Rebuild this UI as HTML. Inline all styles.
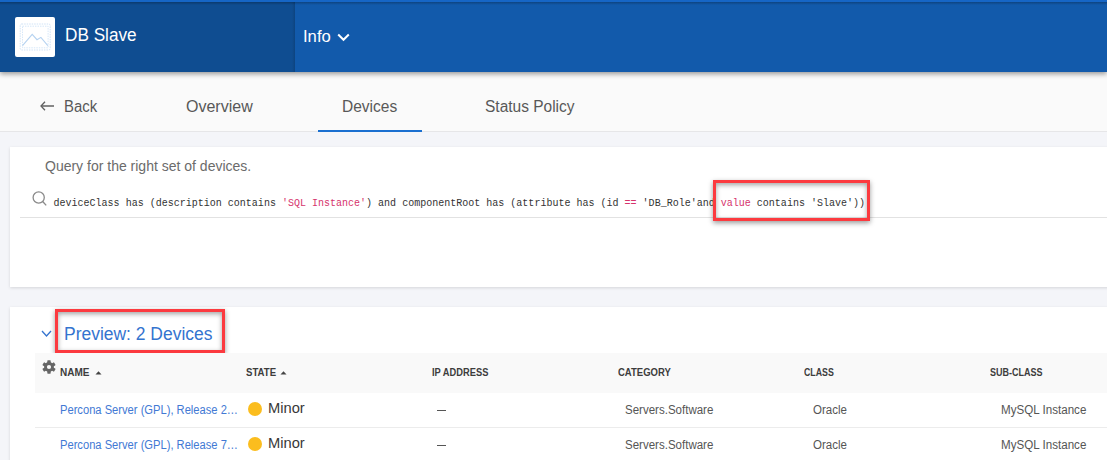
<!DOCTYPE html>
<html><head><meta charset="utf-8">
<style>
*{margin:0;padding:0;box-sizing:border-box}
html,body{width:1107px;height:460px;overflow:hidden;background:#f4f5f9;font-family:"Liberation Sans",sans-serif}
.abs{position:absolute;white-space:nowrap}
.sx{display:inline-block;transform-origin:0 0}
#hdr{position:absolute;left:0;top:0;width:1107px;height:72px;background:#125aab;box-shadow:0 2px 5px rgba(0,0,0,.4);z-index:3}
#hdrtop{position:absolute;left:0;top:0;width:1107px;height:2px;background:#1666c6;z-index:5}
#hdrtopsh{position:absolute;left:0;top:2px;width:1107px;height:3px;background:linear-gradient(rgba(0,0,0,.25),rgba(0,0,0,0));z-index:5}
#hdrl{position:absolute;left:0;top:0;width:295px;height:72px;background:#0f4d91}
#hdrlsh{position:absolute;left:292px;top:0;width:3px;height:72px;background:linear-gradient(90deg,rgba(0,0,0,0),rgba(0,0,0,.12))}
#logo{position:absolute;left:15px;top:17px;width:40px;height:40px;background:#fff;border-radius:2px}
#tabs{position:absolute;left:0;top:72px;width:1107px;height:60px;background:#fafafa;border-bottom:1px solid #e6e6e8;z-index:2}
.tab{position:absolute;top:26px;font-size:16px;color:#585858;line-height:18px}
#uline{position:absolute;left:318px;top:58px;width:104px;height:2px;background:#1a6fd0}
.card{position:absolute;left:10px;width:1110px;background:#fff;box-shadow:0 1px 3px rgba(0,0,0,.13)}
.mono{font-family:"Liberation Mono",monospace;font-size:10px;color:#333}
.pk{color:#d6336c}
.red{position:absolute;border:3px solid #fc3a3f;box-shadow:0 2px 5px rgba(0,0,0,.4), inset 0 2px 5px rgba(0,0,0,.36)}
.th{position:absolute;top:367px;font-size:10px;font-weight:bold;color:#3d3d3d;line-height:12px}
.td{position:absolute;font-size:12px;color:#555;line-height:14px}
.lnk{color:#4279d4}
.dot{position:absolute;width:14px;height:14px;border-radius:50%;background:#fbbd1e}
.minor{position:absolute;font-size:14px;color:#383838;line-height:16px}
</style></head><body>
<div id="hdr">
  <div id="hdrl"></div>
  <div id="hdrlsh"></div>
  <div id="logo">
    <svg width="40" height="40" viewBox="0 0 40 40">
      <rect x="5.2" y="7" width="30" height="26" rx="1.5" fill="none" stroke="#cfe2f6" stroke-width="1" stroke-dasharray="1.5 1"/>
      <rect x="7.5" y="9.2" width="25.6" height="21.6" fill="none" stroke="#d6e7f8" stroke-width="1" stroke-dasharray="1.5 1"/>
      <polyline points="7.5,28.6 17.2,17.3 22,22.7 25.9,20.4 32.8,28.6" fill="none" stroke="#b5d2f0" stroke-width="1.1"/>
    </svg>
  </div>
  <div class="abs" style="left:65px;top:25px;font-size:18px;color:#fff;line-height:20px"><span class="sx" style="transform:scaleX(.955)">DB Slave</span></div>
  <div class="abs" style="left:303px;top:28px;font-size:16px;color:#fff;line-height:18px"><span class="sx" style="transform:scaleX(1.04)">Info</span></div>
  <svg class="abs" style="left:337px;top:33px" width="13" height="9" viewBox="0 0 13 9"><polyline points="1.2,1.5 6.5,6.8 11.8,1.5" fill="none" stroke="#fff" stroke-width="2"/></svg>
</div>
<div id="hdrtop"></div>
<div id="hdrtopsh"></div>
<div id="tabs">
  <svg class="abs" style="left:40px;top:29px" width="15" height="10" viewBox="0 0 15 10"><polyline points="5,0.8 1,5 5,9.2" fill="none" stroke="#606060" stroke-width="1.3"/><line x1="1.2" y1="5" x2="14" y2="5" stroke="#606060" stroke-width="1.5"/></svg>
  <div class="tab" style="left:63.5px"><span class="sx" style="transform:scaleX(.93)">Back</span></div>
  <div class="tab" style="left:186px">Overview</div>
  <div class="tab" style="left:342px"><span class="sx" style="transform:scaleX(.97)">Devices</span></div>
  <div class="tab" style="left:485px"><span class="sx" style="transform:scaleX(.968)">Status Policy</span></div>
  <div id="uline"></div>
</div>

<div class="card" style="top:147px;height:140px"></div>
<div class="abs" style="left:45px;top:158px;font-size:14px;color:#6b6b6b;line-height:16px">Query for the right set of devices.</div>
<svg class="abs" style="left:32px;top:191px" width="16" height="16" viewBox="0 0 16 16"><circle cx="6.7" cy="6.5" r="5.6" fill="none" stroke="#8a8a8a" stroke-width="1.3"/><line x1="10.7" y1="10.5" x2="14.2" y2="14.4" stroke="#8a8a8a" stroke-width="1.3"/></svg>
<div class="abs mono" style="left:53.5px;top:198px;line-height:12px;letter-spacing:0.01px">deviceClass has (description contains <span class="pk">'SQL Instance'</span>) and componentRoot has (attribute has (id <span class="pk">==</span> 'DB_Role'and <span class="pk">value</span> contains 'Slave'))</div>
<div class="abs" style="left:20px;top:217px;width:1100px;height:1px;background:#e2e2e2"></div>
<div class="red" style="left:713px;top:180px;width:157px;height:41px"></div>

<div class="card" style="top:307px;height:160px"></div>
<svg class="abs" style="left:41px;top:330px" width="11" height="8" viewBox="0 0 11 8"><polyline points="1,1 5.5,6 10,1" fill="none" stroke="#3474cf" stroke-width="1.3"/></svg>
<div class="abs" style="left:64px;top:324px;font-size:18px;color:#3474cf;line-height:20px"><span class="sx" style="transform:scaleX(.97)">Preview: 2 Devices</span></div>
<div class="red" style="left:55px;top:309px;width:170px;height:44px"></div>

<div class="abs" style="left:35px;top:353px;width:1100px;height:40px;background:#f9f9f9"></div>
<svg class="abs" style="left:41px;top:358.7px" width="16" height="16" viewBox="0 0 16 16"><g fill="#666"><rect x="6.3" y="1.3" width="3.4" height="4" rx="0.6" transform="rotate(0 8 8)"/><rect x="6.3" y="1.3" width="3.4" height="4" rx="0.6" transform="rotate(-60 8 8)"/><rect x="6.3" y="1.3" width="3.4" height="4" rx="0.6" transform="rotate(60 8 8)"/><rect x="6.3" y="1.3" width="3.4" height="4" rx="0.6" transform="rotate(120 8 8)"/><rect x="6.3" y="1.3" width="3.4" height="4" rx="0.6" transform="rotate(180 8 8)"/><rect x="6.3" y="1.3" width="3.4" height="4" rx="0.6" transform="rotate(240 8 8)"/><path fill-rule="evenodd" d="M8 3.1a4.9 4.9 0 1 1 0 9.8a4.9 4.9 0 1 1 0-9.8zM8 5.9a2.1 2.1 0 1 0 0 4.2a2.1 2.1 0 1 0 0-4.2z"/></g></svg>
<div class="th" style="left:60px">NAME</div>
<svg class="abs" style="left:95px;top:370px" width="7" height="6" viewBox="0 0 7 6"><polygon points="0.5,4.5 3.5,1.2 6.5,4.5" fill="#444"/></svg>
<div class="th" style="left:246px"><span class="sx" style="transform:scaleX(.96)">STATE</span></div>
<svg class="abs" style="left:280px;top:370px" width="7" height="6" viewBox="0 0 7 6"><polygon points="0.5,4.5 3.5,1.2 6.5,4.5" fill="#444"/></svg>
<div class="th" style="left:432px"><span class="sx" style="transform:scaleX(.93)">IP ADDRESS</span></div>
<div class="th" style="left:618px"><span class="sx" style="transform:scaleX(.95)">CATEGORY</span></div>
<div class="th" style="left:804px"><span class="sx" style="transform:scaleX(.88)">CLASS</span></div>
<div class="th" style="left:990px"><span class="sx" style="transform:scaleX(.9)">SUB-CLASS</span></div>

<div class="abs" style="left:35px;top:427px;width:1100px;height:1px;background:#ececec"></div>

<div class="td lnk" style="left:60px;top:403px"><span class="sx" style="transform:scaleX(.93)">Percona Server (GPL), Release 2&#8230;</span></div>
<div class="dot" style="left:248px;top:402px"></div>
<div class="minor" style="left:267.5px;top:400px"><span class="sx" style="transform:scaleX(1.05)">Minor</span></div>
<div class="abs" style="left:437px;top:410px;width:9px;height:1px;background:#555"></div>
<div class="td" style="left:625px;top:403px"><span class="sx" style="transform:scaleX(.96)">Servers.Software</span></div>
<div class="td" style="left:813px;top:403px"><span class="sx" style="transform:scaleX(.96)">Oracle</span></div>
<div class="td" style="left:1001px;top:403px"><span class="sx" style="transform:scaleX(.967)">MySQL Instance</span></div>

<div class="td lnk" style="left:60px;top:438px"><span class="sx" style="transform:scaleX(.93)">Percona Server (GPL), Release 7&#8230;</span></div>
<div class="dot" style="left:248px;top:437px"></div>
<div class="minor" style="left:267.5px;top:435px"><span class="sx" style="transform:scaleX(1.05)">Minor</span></div>
<div class="abs" style="left:437px;top:445px;width:9px;height:1px;background:#555"></div>
<div class="td" style="left:625px;top:438px"><span class="sx" style="transform:scaleX(.96)">Servers.Software</span></div>
<div class="td" style="left:813px;top:438px"><span class="sx" style="transform:scaleX(.96)">Oracle</span></div>
<div class="td" style="left:1001px;top:438px"><span class="sx" style="transform:scaleX(.967)">MySQL Instance</span></div>
</body></html>
